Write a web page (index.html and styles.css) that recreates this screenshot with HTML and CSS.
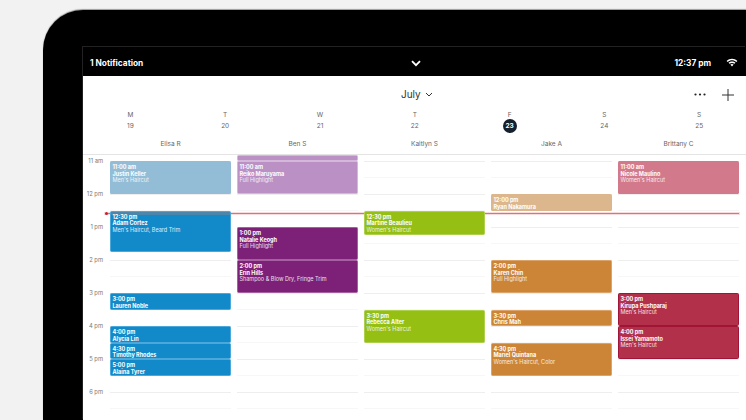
FILE: index.html
```html
<!DOCTYPE html>
<html lang="en">
<head>
    <meta charset="UTF-8">
    <meta name="viewport" content="width=device-width, initial-scale=1.0">
    <title>Appointments Calendar</title>
    <link rel="stylesheet" href="styles.css">
</head>
<body>
    <div class="tablet">
        <div class="screen">
            <div class="status-bar">
                <span>1 Notification</span>
                <svg class="status-chevron" width="10" height="7" viewBox="0 0 10 7"><path d="M1 1.2 5 5.2l4-4" fill="none" stroke="#fff" stroke-width="1.8"/></svg>
                <span class="status-right">
                    <span>12:37 pm</span>
                    <svg width="12" height="9" viewBox="0 0 13 10"><path d="M.5 3.2C4-.1 9-.1 12.5 3.2L11.3 4.5C8.5 1.9 4.5 1.9 1.7 4.5Z M2.6 5.3C4.8 3.3 8.2 3.3 10.4 5.3L9.2 6.5C7.6 5.1 5.4 5.1 3.8 6.5Z M4.7 7.3C5.7 6.5 7.3 6.5 8.3 7.3L6.5 9.5Z" fill="#fff"/></svg>
                </span>
            </div>
            <div class="toolbar">
                <div class="month">July
                    <svg width="8" height="5" viewBox="0 0 8 5"><path d="M1 1l3 3 3-3" fill="none" stroke="#333" stroke-width="1"/></svg>
                </div>
                <div class="actions">
                    <svg width="12" height="3" viewBox="0 0 12 3"><circle cx="1.5" cy="1.5" r="1.1" fill="#222"/><circle cx="6" cy="1.5" r="1.1" fill="#222"/><circle cx="10.5" cy="1.5" r="1.1" fill="#222"/></svg>
                    <svg width="12" height="12" viewBox="0 0 12 12"><path d="M6 0v12M0 6h12" stroke="#333" stroke-width="1"/></svg>
                </div>
            </div>
            <div class="days">
                <div class="day"><span>M</span><span class="num">19</span></div>
                <div class="day"><span>T</span><span class="num">20</span></div>
                <div class="day"><span>W</span><span class="num">21</span></div>
                <div class="day"><span>T</span><span class="num">22</span></div>
                <div class="day"><span>F</span><span class="num today">23</span></div>
                <div class="day"><span>S</span><span class="num">24</span></div>
                <div class="day"><span>S</span><span class="num">25</span></div>
            </div>
            <div class="staff">
                <span>Elisa R</span>
                <span>Ben S</span>
                <span>Kaitlyn S</span>
                <span>Jake A</span>
                <span>Brittany C</span>
            </div>
            <div class="schedule">
                <div class="now-line"></div>
                <div class="hours">
                    <span>11 am</span><span>12 pm</span><span>1 pm</span><span>2 pm</span><span>3 pm</span><span>4 pm</span><span>5 pm</span><span>6 pm</span>
                </div>
                <!-- rows are quarter hours, 11:00 am starts on line 2 -->
                <div class="column">
                    <div class="event blue-past" style="grid-row: 2 / span 4"><b>11:00 am</b><b>Justin Keller</b><span>Men's Haircut</span></div>
                    <div class="event blue now-blue" style="grid-row: 8 / span 5"><b>12:30 pm</b><b>Adam Cortez</b><span>Men's Haircut, Beard Trim</span></div>
                    <div class="event blue" style="grid-row: 18 / span 2"><b>3:00 pm</b><b>Lauren Noble</b></div>
                    <div class="event blue" style="grid-row: 22 / span 2"><b>4:00 pm</b><b>Alycia Lin</b></div>
                    <div class="event blue" style="grid-row: 24 / span 2"><b>4:30 pm</b><b>Timothy Rhodes</b></div>
                    <div class="event blue" style="grid-row: 26 / span 2"><b>5:00 pm</b><b>Alaina Tyrer</b></div>
                </div>
                <div class="column">
                    <div class="event purple-past" style="grid-row: 1 / span 1"></div>
                    <div class="event purple-past" style="grid-row: 2 / span 4"><b>11:00 am</b><b>Reiko Maruyama</b><span>Full Highlight</span></div>
                    <div class="event purple" style="grid-row: 10 / span 4"><b>1:00 pm</b><b>Natalie Keogh</b><span>Full Highlight</span></div>
                    <div class="event purple" style="grid-row: 14 / span 4"><b>2:00 pm</b><b>Erin Hills</b><span>Shampoo &amp; Blow Dry, Fringe Trim</span></div>
                </div>
                <div class="column">
                    <div class="event green" style="grid-row: 8 / span 3"><b>12:30 pm</b><b>Martine Beaulieu</b><span>Women's Haircut</span></div>
                    <div class="event green" style="grid-row: 20 / span 4"><b>3:30 pm</b><b>Rebecca Alter</b><span>Women's Haircut</span></div>
                </div>
                <div class="column">
                    <div class="event orange-past" style="grid-row: 6 / span 2"><b>12:00 pm</b><b>Ryan Nakamura</b></div>
                    <div class="event orange" style="grid-row: 14 / span 4"><b>2:00 pm</b><b>Karen Chin</b><span>Full Highlight</span></div>
                    <div class="event orange" style="grid-row: 20 / span 2"><b>3:30 pm</b><b>Chris Mah</b></div>
                    <div class="event orange" style="grid-row: 24 / span 4"><b>4:30 pm</b><b>Mariel Quintana</b><span>Women's Haircut, Color</span></div>
                </div>
                <div class="column">
                    <div class="event red-past" style="grid-row: 2 / span 4"><b>11:00 am</b><b>Nicole Maulino</b><span>Women's Haircut</span></div>
                    <div class="event red" style="grid-row: 18 / span 4"><b>3:00 pm</b><b>Kirupa Pushparaj</b><span>Men's Haircut</span></div>
                    <div class="event red" style="grid-row: 22 / span 4"><b>4:00 pm</b><b>Issei Yamamoto</b><span>Men's Haircut</span></div>
                </div>
            </div>
        </div>
    </div>
</body>
</html>
```

FILE: styles.css
```css
html, body {
    margin: 0;
    height: 420px;
    overflow: hidden;
    background-color: #f2f2f2;
    font-family: Inter, "Liberation Sans", sans-serif;
}
.tablet {
    margin: 10px 0 0 43px;
    height: 410px;
    padding: 37px 0 0 40px;
    box-sizing: border-box;
    background-color: #000;
    border-radius: 40px 0 0 0;
    box-shadow: 0 -1px 1px #999;
}
.screen {
    height: 373px;
    background-color: #fff;
    display: flex;
    flex-direction: column;
    box-shadow: -1px -1px 0 #222;
}
.status-bar {
    flex: 0 0 29px;
    background-color: #000;
    color: #fff;
    font-size: 8.3px;
    font-weight: 700;
    display: flex;
    align-items: center;
    justify-content: space-between;
    padding: 2px 8px 0 7px;
    box-sizing: border-box;
    position: relative;
}
.status-chevron {
    position: absolute;
    left: 328px;
    top: 13px;
}
.status-right {
    display: flex;
    align-items: center;
    gap: 15px;
}
.toolbar {
    flex: 0 0 33px;
    display: flex;
    align-items: center;
    justify-content: flex-end;
    padding: 4px 12px 0 0;
    box-sizing: border-box;
    position: relative;
}
.month {
    position: absolute;
    left: 318px;
    top: 12px;
    font-size: 10px;
    color: #333;
    display: flex;
    align-items: center;
    gap: 4px;
}
.actions {
    display: flex;
    align-items: center;
    gap: 16px;
}
.days {
    flex: 0 0 27px;
    display: grid;
    grid-template-columns: repeat(7, 94.8px);
    font-size: 6.5px;
    color: #666;
}
.day {
    display: flex;
    flex-direction: column;
    align-items: center;
    padding-top: 3px;
    line-height: 7px;
}
.num {
    width: 14px;
    height: 14px;
    line-height: 14px;
    text-align: center;
    border-radius: 50%;
}
.today {
    background-color: #14202e;
    color: #fff;
    font-weight: 700;
}
.staff {
    flex: 0 0 19px;
    display: grid;
    grid-template-columns: repeat(5, 127px);
    padding-left: 27px;
    font-size: 6.5px;
    line-height: 16px;
    color: #666;
    border-bottom: 1px solid #e4e4e4;
    box-sizing: border-box;
}
.staff span {
    width: 121px;
    text-align: center;
}
.schedule {
    flex: 1;
    min-height: 0;
    display: grid;
    grid-template-columns: 27px repeat(5, 127px);
    position: relative;
    overflow: hidden;
}
.now-line {
    position: absolute;
    left: 22px;
    right: 7px;
    top: 58px;
    height: 1px;
    background-color: #e0707a;
    box-shadow: 0 0 0 1px rgba(225, 90, 100, 0.22);
}
.now-line::before {
    content: "";
    position: absolute;
    left: 0;
    top: -1px;
    width: 3px;
    height: 3px;
    border-radius: 50%;
    background-color: #c8202e;
}
.hours {
    display: flex;
    flex-direction: column;
    padding: 0 7px 0 0;
    font-size: 5.8px;
    color: #777;
    text-align: right;
}
.hours span {
    flex: 0 0 33px;
    line-height: 12px;
}
.column {
    display: grid;
    grid-template-rows: 6px repeat(30, 8.25px);
    align-content: start;
    margin-right: 6px;
    background-image: linear-gradient(to bottom, #eee 1px, transparent 1px 16.5px, #f7f7f7 16.5px, #f7f7f7 17.5px, transparent 17.5px);
    background-size: 100% 33px;
    background-position: 0 6px;
}
.event {
    grid-column: 1;
    color: #fff;
    font-size: 5.5px;
    line-height: 6.7px;
    padding: 2px 1.5px 0;
    border: 1px solid transparent;
    border-radius: 1.5px;
    overflow: hidden;
    display: flex;
    flex-direction: column;
    box-sizing: border-box;
    position: relative;
}
.event b {
    font-weight: 700;
}
.event span {
    opacity: 0.85;
}
.blue { background-color: #1289c9; border-color: #4aa8da; }
.now-blue { background-image: linear-gradient(#4d86ab 3px, transparent 3px); }
.purple { background-color: #7d2178; border-color: #a560a0; }
.green { background-color: #95bf12; border-color: #aed14d; }
.orange { background-color: #cc8537; border-color: #dca46a; }
.red { background-color: #b3304a; border-color: #a01535; }
.blue-past { background-color: #93bdd6; }
.purple-past { background-color: #bb90c4; border-color: #d3b8da; }
.orange-past { background-color: #dcb78d; }
.red-past { background-color: #d27a8b; }
```
